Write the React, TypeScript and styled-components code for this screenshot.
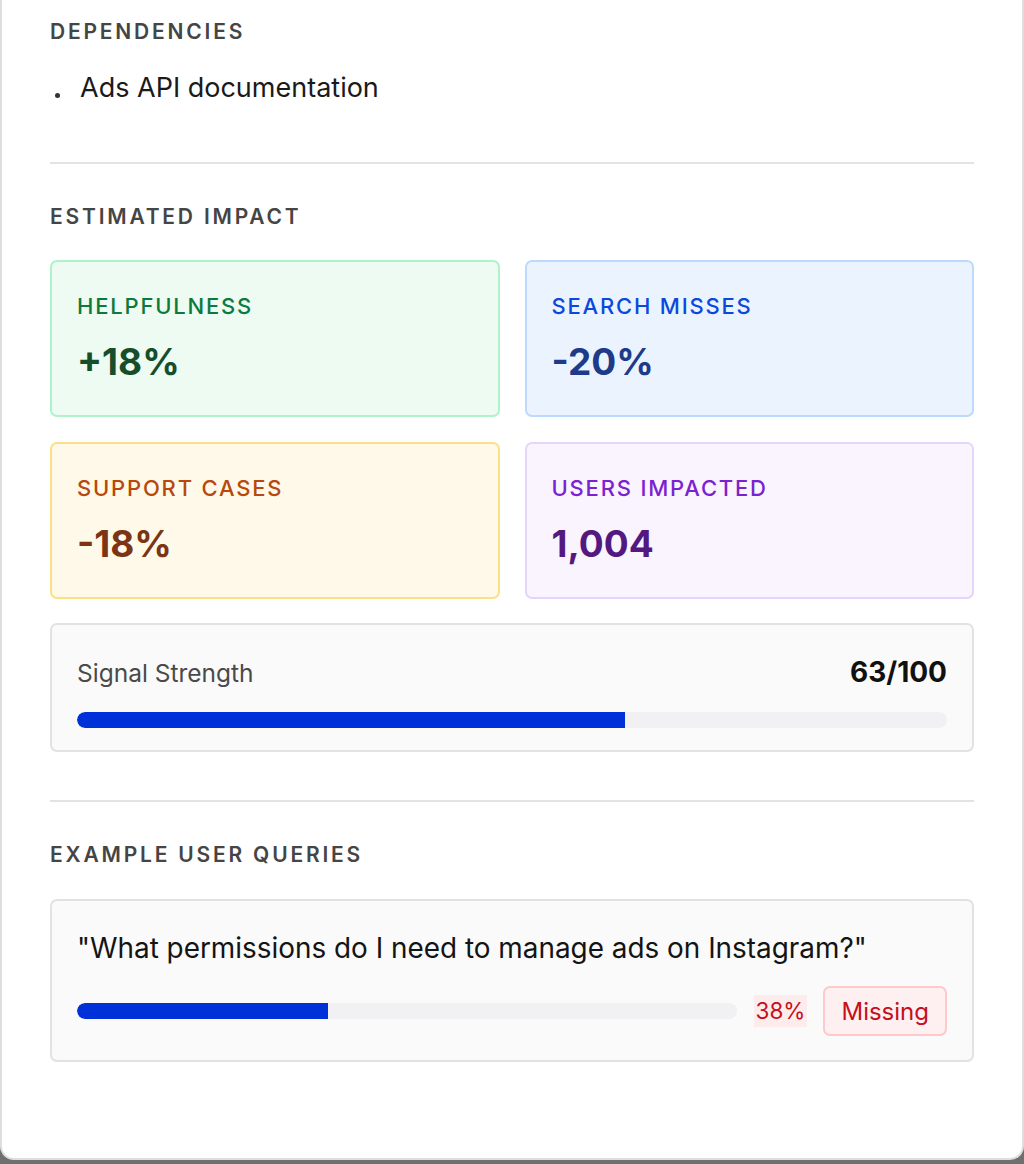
import React from "react";
import styled, { createGlobalStyle } from "styled-components";

// ============== Global =============
const GlobalStyle = createGlobalStyle`
  html, body {
    margin: 0;
    padding: 0;
    background: #6f6f6f;
  }
  * {
    box-sizing: border-box;
  }
  body {
    font-family: Inter, "Noto Sans", "Liberation Sans", sans-serif;
    color: #111;
  }
`;

// ============== Style Component =============
const Panel = styled.div`
  width: 1024px;
  height: 1160px;
  background: #ffffff;
  border: 2px solid #dedede;
  border-top: none;
  border-radius: 0 0 14px 14px;
  padding: 19px 48px 0;
  display: flex;
  flex-direction: column;
`;

const Section = styled.section<{ $mt?: number }>`
  display: flex;
  flex-direction: column;
  margin-top: ${(p) => p.$mt ?? 0}px;
`;

const SectionTitle = styled.h3`
  margin: 0;
  font-size: 21px;
  line-height: 26px;
  font-weight: 600;
  letter-spacing: 2.8px;
  color: #454545;
  text-transform: uppercase;
`;

const Divider = styled.hr<{ $mt: number }>`
  margin: ${(p) => p.$mt}px 0 0;
  border: none;
  height: 2px;
  background: #e3e3e3;
`;

const DepList = styled.ul`
  list-style: none;
  margin: 26px 0 0;
  padding: 0;
`;

const DepItem = styled.li`
  display: flex;
  align-items: center;
  gap: 20px;
  font-size: 27px;
  line-height: 34px;
  color: #1a1a1a;
  &::before {
    content: "";
    width: 5px;
    height: 5px;
    border-radius: 50%;
    background: #333;
    margin: 14px 0 0 5px;
  }
`;

const ImpactGrid = styled.div`
  display: grid;
  grid-template-columns: 1fr 1fr;
  gap: 25px;
  margin-top: 30px;
`;

type Tone = "green" | "blue" | "amber" | "purple";

const tones: Record<Tone, { bg: string; border: string; label: string; value: string }> = {
  green: { bg: "#edfbf3", border: "#aef2cc", label: "#0d7a3b", value: "#164e2c" },
  blue: { bg: "#ebf4fe", border: "#bcdafd", label: "#0b49dc", value: "#1e3a8a" },
  amber: { bg: "#fef9e9", border: "#fbe08a", label: "#b8480b", value: "#7b3415" },
  purple: { bg: "#f9f4fe", border: "#e6d4fd", label: "#7b22d0", value: "#53197f" },
};

const ImpactCard = styled.div<{ $tone: Tone }>`
  height: 157px;
  border-radius: 7px;
  background: ${(p) => tones[p.$tone].bg};
  border: 2px solid ${(p) => tones[p.$tone].border};
  padding: 29px 25px 0;
`;

const ImpactLabel = styled.div<{ $tone: Tone }>`
  font-size: 22px;
  line-height: 30px;
  letter-spacing: 1.8px;
  font-weight: 500;
  color: ${(p) => tones[p.$tone].label};
`;

const ImpactValue = styled.div<{ $tone: Tone }>`
  margin-top: 19px;
  font-size: 37px;
  line-height: 44px;
  font-weight: 700;
  color: ${(p) => tones[p.$tone].value};
`;

const GreyCard = styled.div`
  background: #fafafa;
  border: 2px solid #e2e2e2;
  border-radius: 7px;
`;

const SignalCard = styled(GreyCard)`
  margin-top: 24px;
  height: 129px;
  padding: 32px 25px 0;
`;

const SignalHead = styled.div`
  display: flex;
  justify-content: space-between;
  align-items: baseline;
`;

const SignalLabel = styled.span`
  font-size: 24.5px;
  line-height: 30px;
  color: #4a4a4a;
`;

const SignalScore = styled.span`
  font-size: 28px;
  line-height: 30px;
  font-weight: 700;
  color: #111;
`;

const Track = styled.div<{ $mt?: number }>`
  flex: 1;
  height: 16px;
  border-radius: 8px;
  background: #f1f1f4;
  overflow: hidden;
  margin-top: ${(p) => p.$mt ?? 0}px;
`;

const Fill = styled.div`
  height: 100%;
  background: #0030d8;
  border-radius: 8px 0 0 8px;
`;

const QueryCard = styled(GreyCard)`
  margin-top: 31px;
  height: 163px;
  padding: 29px 25px 0;
`;

const QueryText = styled.div`
  font-size: 27.9px;
  line-height: 36px;
  color: #141414;
`;

const QueryRow = styled.div`
  display: flex;
  align-items: center;
  margin-top: 20px;
`;

const Percent = styled.span`
  margin-left: 17px;
  padding: 0 2px;
  font-size: 22.5px;
  line-height: 32px;
  color: #c4101c;
  background: #fdecec;
`;

const Badge = styled.span`
  margin-left: 16px;
  height: 50px;
  padding: 0 16px;
  display: inline-flex;
  align-items: center;
  font-size: 24px;
  color: #c4101c;
  background: #feeff0;
  border: 2px solid #fec9ca;
  border-radius: 7px;
`;

// ============== Data ================

interface IImpact {
  label: string;
  value: string;
  tone: Tone;
}

const impacts: IImpact[] = [
  { label: "Helpfulness", value: "+18%", tone: "green" },
  { label: "Search misses", value: "-20%", tone: "blue" },
  { label: "Support cases", value: "-18%", tone: "amber" },
  { label: "Users impacted", value: "1,004", tone: "purple" },
];

const signal = 63;
const query = {
  text: '"What permissions do I need to manage ads on Instagram?"',
  score: 38,
};

// ========================================

export default function App() {
  return (
    <>
      <GlobalStyle />
      <Panel>
        <Section>
          <SectionTitle>Dependencies</SectionTitle>
          <DepList>
            <DepItem>Ads API documentation</DepItem>
          </DepList>
        </Section>

        <Divider $mt={57} />

        <Section $mt={40}>
          <SectionTitle>Estimated Impact</SectionTitle>
          <ImpactGrid>
            {impacts.map((item) => (
              <ImpactCard key={item.label} $tone={item.tone}>
                <ImpactLabel $tone={item.tone}>{item.label.toUpperCase()}</ImpactLabel>
                <ImpactValue $tone={item.tone}>{item.value}</ImpactValue>
              </ImpactCard>
            ))}
          </ImpactGrid>
          <SignalCard>
            <SignalHead>
              <SignalLabel>Signal Strength</SignalLabel>
              <SignalScore>{signal}/100</SignalScore>
            </SignalHead>
            <Track $mt={24}>
              <Fill style={{ width: `${signal}%` }} />
            </Track>
          </SignalCard>
        </Section>

        <Divider $mt={48} />

        <Section $mt={40}>
          <SectionTitle>Example User Queries</SectionTitle>
          <QueryCard>
            <QueryText>{query.text}</QueryText>
            <QueryRow>
              <Track>
                <Fill style={{ width: `${query.score}%` }} />
              </Track>
              <Percent>{query.score}%</Percent>
              <Badge>Missing</Badge>
            </QueryRow>
          </QueryCard>
        </Section>
      </Panel>
    </>
  );
}
